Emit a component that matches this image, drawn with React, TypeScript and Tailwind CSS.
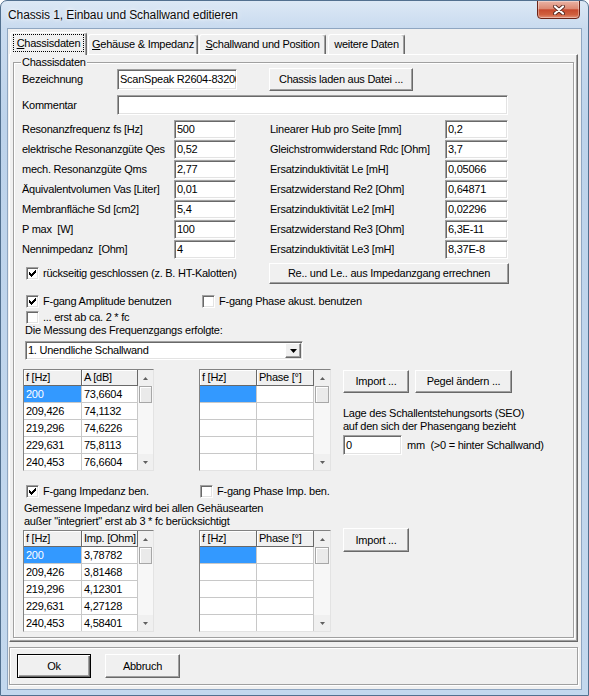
import React from 'react';

const sunken =
  'border border-t-[#a0a0a0] border-l-[#a0a0a0] border-r-white border-b-white shadow-[inset_1px_1px_0_#696969,inset_-1px_-1px_0_#e3e3e3]';
const raised =
  'border border-t-white border-l-white border-r-[#696969] border-b-[#696969] shadow-[inset_-1px_-1px_0_#a0a0a0] bg-[#f0f0f0]';

function Field({ className, value }: { className: string; value?: string }) {
  return (
    <div className={`${sunken} ${className} bg-white pl-[2px] flex items-center overflow-hidden whitespace-nowrap`}>
      {value}
    </div>
  );
}

function Btn({ className, children }: { className: string; children: React.ReactNode }) {
  return (
    <div className={`${raised} ${className} flex items-center justify-center whitespace-nowrap`}>{children}</div>
  );
}

function Check({ checked }: { checked?: boolean }) {
  return (
    <span className={`${sunken} w-[13px] h-[13px] bg-white flex items-center justify-center shrink-0`}>
      {checked && (
        <svg width="7" height="7" viewBox="0 0 7 7" shapeRendering="crispEdges">
          <rect x="6" y="0" width="1" height="1" />
          <rect x="5" y="1" width="2" height="1" />
          <rect x="0" y="2" width="1" height="1" />
          <rect x="4" y="2" width="3" height="1" />
          <rect x="0" y="3" width="2" height="1" />
          <rect x="3" y="3" width="3" height="1" />
          <rect x="0" y="4" width="5" height="1" />
          <rect x="1" y="5" width="3" height="1" />
          <rect x="2" y="6" width="1" height="1" />
        </svg>
      )}
    </span>
  );
}

function Arrow({ up, color = '#606060', w = 5 }: { up?: boolean; color?: string; w?: number }) {
  const h = Math.ceil(w / 2);
  const d = up ? `M0 ${h} L${w / 2} 0 L${w} ${h} Z` : `M0 0 L${w} 0 L${w / 2} ${h} Z`;
  return (
    <svg width={w} height={h} viewBox={`0 0 ${w} ${h}`}>
      <path d={d} fill={color} />
    </svg>
  );
}

function Scrollbar({ className }: { className: string }) {
  return (
    <div className={`${className} h-[100px] flex flex-col bg-[#f7f7f7]`}>
      <div className="h-[16px] flex items-center justify-center bg-[#f0f0f0]">
        <Arrow up />
      </div>
      <div className="h-[17px] mx-[1px] border border-[#a7a7a7] bg-[#eaeaea] shadow-[inset_1px_1px_0_#fff]" />
      <div className="flex-1" />
      <div className="h-[16px] flex items-center justify-center bg-[#f0f0f0]">
        <Arrow />
      </div>
    </div>
  );
}

type GridProps = {
  head: [string, string];
  rows: [string, string][];
  c1: string;
  c2: string;
  sb: string;
};

function Grid({ head, rows, c1, c2, sb }: GridProps) {
  const headCell =
    'h-[16px] pl-[2px] leading-[15px] border-r border-b border-[#696969] shadow-[inset_1px_1px_0_#fff] bg-[#f0f0f0] whitespace-pre';
  const cell = 'h-[17px] pl-[2px] leading-[16px] border-r border-b border-[#c8c8c8]';
  return (
    <div className="border border-t-[#828282] border-l-[#828282] border-r-[#e3e3e3] border-b-[#e3e3e3] flex bg-white">
      <div className="flex flex-col h-[100px] overflow-hidden">
        <div className="flex">
          <div className={`${headCell} ${c1}`}>{head[0]}</div>
          <div className={`${headCell} ${c2}`}>{head[1]}</div>
        </div>
        {rows.map((r, i) => (
          <div key={i} className="flex">
            <div className={`${cell} ${c1} ${i === 0 ? 'bg-[#3399ff] text-white' : ''}`}>{r[0]}</div>
            <div className={`${cell} ${c2}`}>{r[1]}</div>
          </div>
        ))}
      </div>
      <Scrollbar className={sb} />
    </div>
  );
}

export default function App() {
  const params = [
    ['Resonanzfrequenz fs [Hz]', '500', 'Linearer Hub pro Seite [mm]', '0,2'],
    ['elektrische Resonanzgüte Qes', '0,52', 'Gleichstromwiderstand Rdc [Ohm]', '3,7'],
    ['mech. Resonanzgüte Qms', '2,77', 'Ersatzinduktivität Le [mH]', '0,05066'],
    ['Äquivalentvolumen Vas [Liter]', '0,01', 'Ersatzwiderstand Re2 [Ohm]', '0,64871'],
    ['Membranfläche Sd [cm2]', '5,4', 'Ersatzinduktivität Le2 [mH]', '0,02296'],
    ['P max  [W]', '100', 'Ersatzwiderstand Re3 [Ohm]', '6,3E-11'],
    ['Nennimpedanz  [Ohm]', '4', 'Ersatzinduktivität Le3 [mH]', '8,37E-8'],
  ];

  const amp: [string, string][] = [
    ['200', '73,6604'],
    ['209,426', '74,1132'],
    ['219,296', '74,6226'],
    ['229,631', '75,8113'],
    ['240,453', '76,6604'],
  ];
  const imp: [string, string][] = [
    ['200', '3,78782'],
    ['209,426', '3,81468'],
    ['219,296', '4,12301'],
    ['229,631', '4,27128'],
    ['240,453', '4,58401'],
  ];
  const empty: [string, string][] = [
    ['', ''],
    ['', ''],
    ['', ''],
    ['', ''],
    ['', ''],
  ];

  return (
    <div className="w-[589px] h-[696px] bg-white font-['Liberation_Sans',Arial,sans-serif] text-[11px] leading-[13px] tracking-[-0.25px] text-black">
      <div className="w-[589px] h-[696px] rounded-t-[7px] border border-[#52708f] overflow-hidden bg-[linear-gradient(180deg,#dce8f5_0px,#c9dbef_27px,#bdd3eb_120px,#c3d8ee_100%)]">
        {/* title bar */}
        <div className="h-[27px] flex items-start justify-between">
          <div className="pl-[7px] pt-[7px] text-[12px] leading-[14px] tracking-[-0.1px] text-[#0b0b0b] [text-shadow:0_0_6px_#fff,0_0_3px_#fff]">
            Chassis 1, Einbau und Schallwand editieren
          </div>
          <div className="mr-[8px] w-[43px] h-[19px] -mt-px rounded-b-[4px] border border-[#6b2418] bg-[linear-gradient(180deg,#eab3a5_0%,#dc8a74_45%,#c74a2f_52%,#d0603f_80%,#e2917a_100%)] shadow-[inset_0_0_0_1px_rgba(255,255,255,0.35)] flex items-center justify-center">
            <svg width="12" height="10" viewBox="0 0 12 10">
              <path d="M2 1.5 L10 8.5 M10 1.5 L2 8.5" stroke="#5a2a22" strokeWidth="4" strokeLinecap="round" />
              <path d="M2 1.5 L10 8.5 M10 1.5 L2 8.5" stroke="#fff" strokeWidth="2.2" strokeLinecap="round" />
            </svg>
          </div>
        </div>

        {/* client area */}
        <div className="ml-[6px] w-[575px] h-[662px] border border-[#8fa6c1] bg-[#f0f0f0]">
          {/* tabs */}
          <div className="relative z-10 h-[25px] flex items-end">
            <div className="ml-[2px] w-[77px] h-[23px] -mb-px bg-[#f0f0f0] border-t border-l border-r border-t-white border-l-white border-r-[#696969] rounded-t-[3px] shadow-[inset_-1px_0_0_#a0a0a0] pt-[1px] px-[2px]">
              <div className="h-[18px] border border-dotted border-black flex items-center justify-center">
                <span>
                  <span className="underline">C</span>hassisdaten
                </span>
              </div>
            </div>
            <div className="ml-[1px] w-[110px] h-[20px] border-t border-l border-r border-t-white border-l-white border-r-[#696969] rounded-t-[3px] shadow-[inset_-1px_0_0_#a0a0a0] flex items-center justify-center">
              <span>
                <span className="underline">G</span>ehäuse &amp; Impedanz
              </span>
            </div>
            <div className="ml-[1px] w-[127px] h-[20px] border-t border-l border-r border-t-white border-l-white border-r-[#696969] rounded-t-[3px] shadow-[inset_-1px_0_0_#a0a0a0] flex items-center justify-center">
              <span>
                <span className="underline">S</span>challwand und Position
              </span>
            </div>
            <div className="ml-[2px] w-[77px] h-[20px] border-t border-l border-r border-t-white border-l-white border-r-[#696969] rounded-t-[3px] shadow-[inset_-1px_0_0_#a0a0a0] flex items-center justify-center">
              weitere Daten
            </div>
          </div>

          {/* tab panel */}
          <div className="ml-[1px] w-[569px] h-[588px] border border-t-white border-l-white border-r-[#696969] border-b-[#696969] shadow-[inset_-1px_-1px_0_#a0a0a0] pt-[1px]">
            <fieldset className="ml-[3px] w-[561px] border border-[#a0a0a0] shadow-[inset_1px_1px_0_#fff,1px_1px_0_#fff] pb-[5px] flex flex-col">
              <legend className="ml-[7px] px-[1px] leading-[12px] bg-[#f0f0f0]">Chassisdaten</legend>

              <div className="flex items-center h-[23px]">
                <span className="ml-[8px] w-[95px]">Bezeichnung</span>
                <Field className="w-[120px] h-[21px]" value="ScanSpeak R2604-832000" />
                <Btn className="ml-[32px] w-[144px] h-[23px]">Chassis laden aus Datei ...</Btn>
              </div>

              <div className="mt-[4px] flex items-center h-[20px]">
                <span className="ml-[8px] w-[95px]">Kommentar</span>
                <Field className="w-[391px] h-[20px]" />
              </div>

              <div className="mt-[5px] flex flex-col">
                {params.map((p) => (
                  <div key={p[0]} className="flex items-start h-[20px]">
                    <span className="ml-[8px] w-[152px] leading-[19px] whitespace-pre">{p[0]}</span>
                    <Field className="w-[62px] h-[19px]" value={p[1]} />
                    <span className="ml-[34px] w-[175px] leading-[19px] whitespace-pre">{p[2]}</span>
                    <Field className="w-[63px] h-[19px]" value={p[3]} />
                  </div>
                ))}
              </div>

              <div className="mt-[3px] flex items-center h-[21px]">
                <div className="w-[255px] flex items-center">
                  <span className="ml-[12px]">
                    <Check checked />
                  </span>
                  <span className="ml-[4px]">rückseitig geschlossen (z. B. HT-Kalotten)</span>
                </div>
                <Btn className="w-[240px] h-[21px]">Re.. und Le.. aus Impedanzgang errechnen</Btn>
              </div>

              <div className="mt-[10px] flex items-center h-[14px]">
                <div className="ml-[12px] w-[176px] flex items-center">
                  <Check checked />
                  <span className="ml-[4px]">F-gang Amplitude benutzen</span>
                </div>
                <Check />
                <span className="ml-[4px]">F-gang Phase akust. benutzen</span>
              </div>

              <div className="mt-[2px] flex items-center h-[14px]">
                <span className="ml-[12px]">
                  <Check />
                </span>
                <span className="ml-[4px]">... erst ab ca. 2 * fc</span>
              </div>

              <div className="ml-[11px] h-[13px]">Die Messung des Frequenzgangs erfolgte:</div>

              <div className={`${sunken} mt-[4px] ml-[11px] w-[278px] h-[19px] bg-white flex items-center`}>
                <span className="flex-1 pl-[2px]">1. Unendliche Schallwand</span>
                <div className={`${raised} w-[16px] h-[15px] mr-[1px] flex items-center justify-center`}>
                  <Arrow color="#000" w={7} />
                </div>
              </div>

              <div className="mt-[9px] flex items-start">
                <div className="ml-[9px] w-[131px]">
                  <Grid head={['f [Hz]', 'A [dB]']} rows={amp} c1="w-[58px]" c2="w-[56px]" sb="w-[15px]" />
                </div>
                <div className="ml-[45px] w-[132px]">
                  <Grid head={['f [Hz]', 'Phase [°]']} rows={empty} c1="w-[57px]" c2="w-[57px]" sb="w-[16px]" />
                </div>
                <div className="ml-[12px] flex flex-col">
                  <div className="mt-[1px] flex">
                    <Btn className="w-[66px] h-[23px]">Import ...</Btn>
                    <Btn className="ml-[6px] w-[97px] h-[23px]">Pegel ändern ...</Btn>
                  </div>
                  <div className="mt-[14px]">Lage des Schallentstehungsorts (SEO)</div>
                  <div>auf den sich der Phasengang bezieht</div>
                  <div className="mt-[2px] flex items-center">
                    <Field className="w-[59px] h-[20px]" value="0" />
                    <span className="ml-[5px] whitespace-pre">mm  (&gt;0 = hinter Schallwand)</span>
                  </div>
                </div>
              </div>

              <div className="mt-[13px] flex items-center h-[14px]">
                <div className="ml-[12px] w-[174px] flex items-center">
                  <Check checked />
                  <span className="ml-[4px]">F-gang Impedanz ben.</span>
                </div>
                <Check />
                <span className="ml-[4px]">F-gang Phase Imp. ben.</span>
              </div>

              <div className="mt-[4px] ml-[10px]">
                <div>Gemessene Impedanz wird bei allen Gehäusearten</div>
                <div>außer &quot;integriert&quot; erst ab 3 * fc berücksichtigt</div>
              </div>

              <div className="flex items-start">
                <div className="mt-[2px] ml-[9px] w-[131px]">
                  <Grid head={['f [Hz]', 'Imp. [Ohm]']} rows={imp} c1="w-[58px]" c2="w-[56px]" sb="w-[15px]" />
                </div>
                <div className="mt-[2px] ml-[45px] w-[132px]">
                  <Grid head={['f [Hz]', 'Phase [°]']} rows={empty} c1="w-[57px]" c2="w-[57px]" sb="w-[16px]" />
                </div>
                <Btn className="ml-[12px] w-[66px] h-[24px]">Import ...</Btn>
              </div>
            </fieldset>
          </div>

          {/* bottom buttons */}
          <div className="mt-[5px] ml-[1px] w-[569px] h-[38px] border border-[#a0a0a0] shadow-[inset_1px_1px_0_#fff,1px_1px_0_#fff] pt-[6px] flex items-start">
            <div className="ml-[7px] w-[74px] h-[24px] border border-black bg-[#f0f0f0] shadow-[inset_1px_1px_0_#fff,inset_-1px_-1px_0_#696969,inset_-2px_-2px_0_#a0a0a0] flex items-center justify-center">
              Ok
            </div>
            <Btn className="ml-[14px] w-[75px] h-[24px]">Abbruch</Btn>
          </div>
        </div>
      </div>
    </div>
  );
}
